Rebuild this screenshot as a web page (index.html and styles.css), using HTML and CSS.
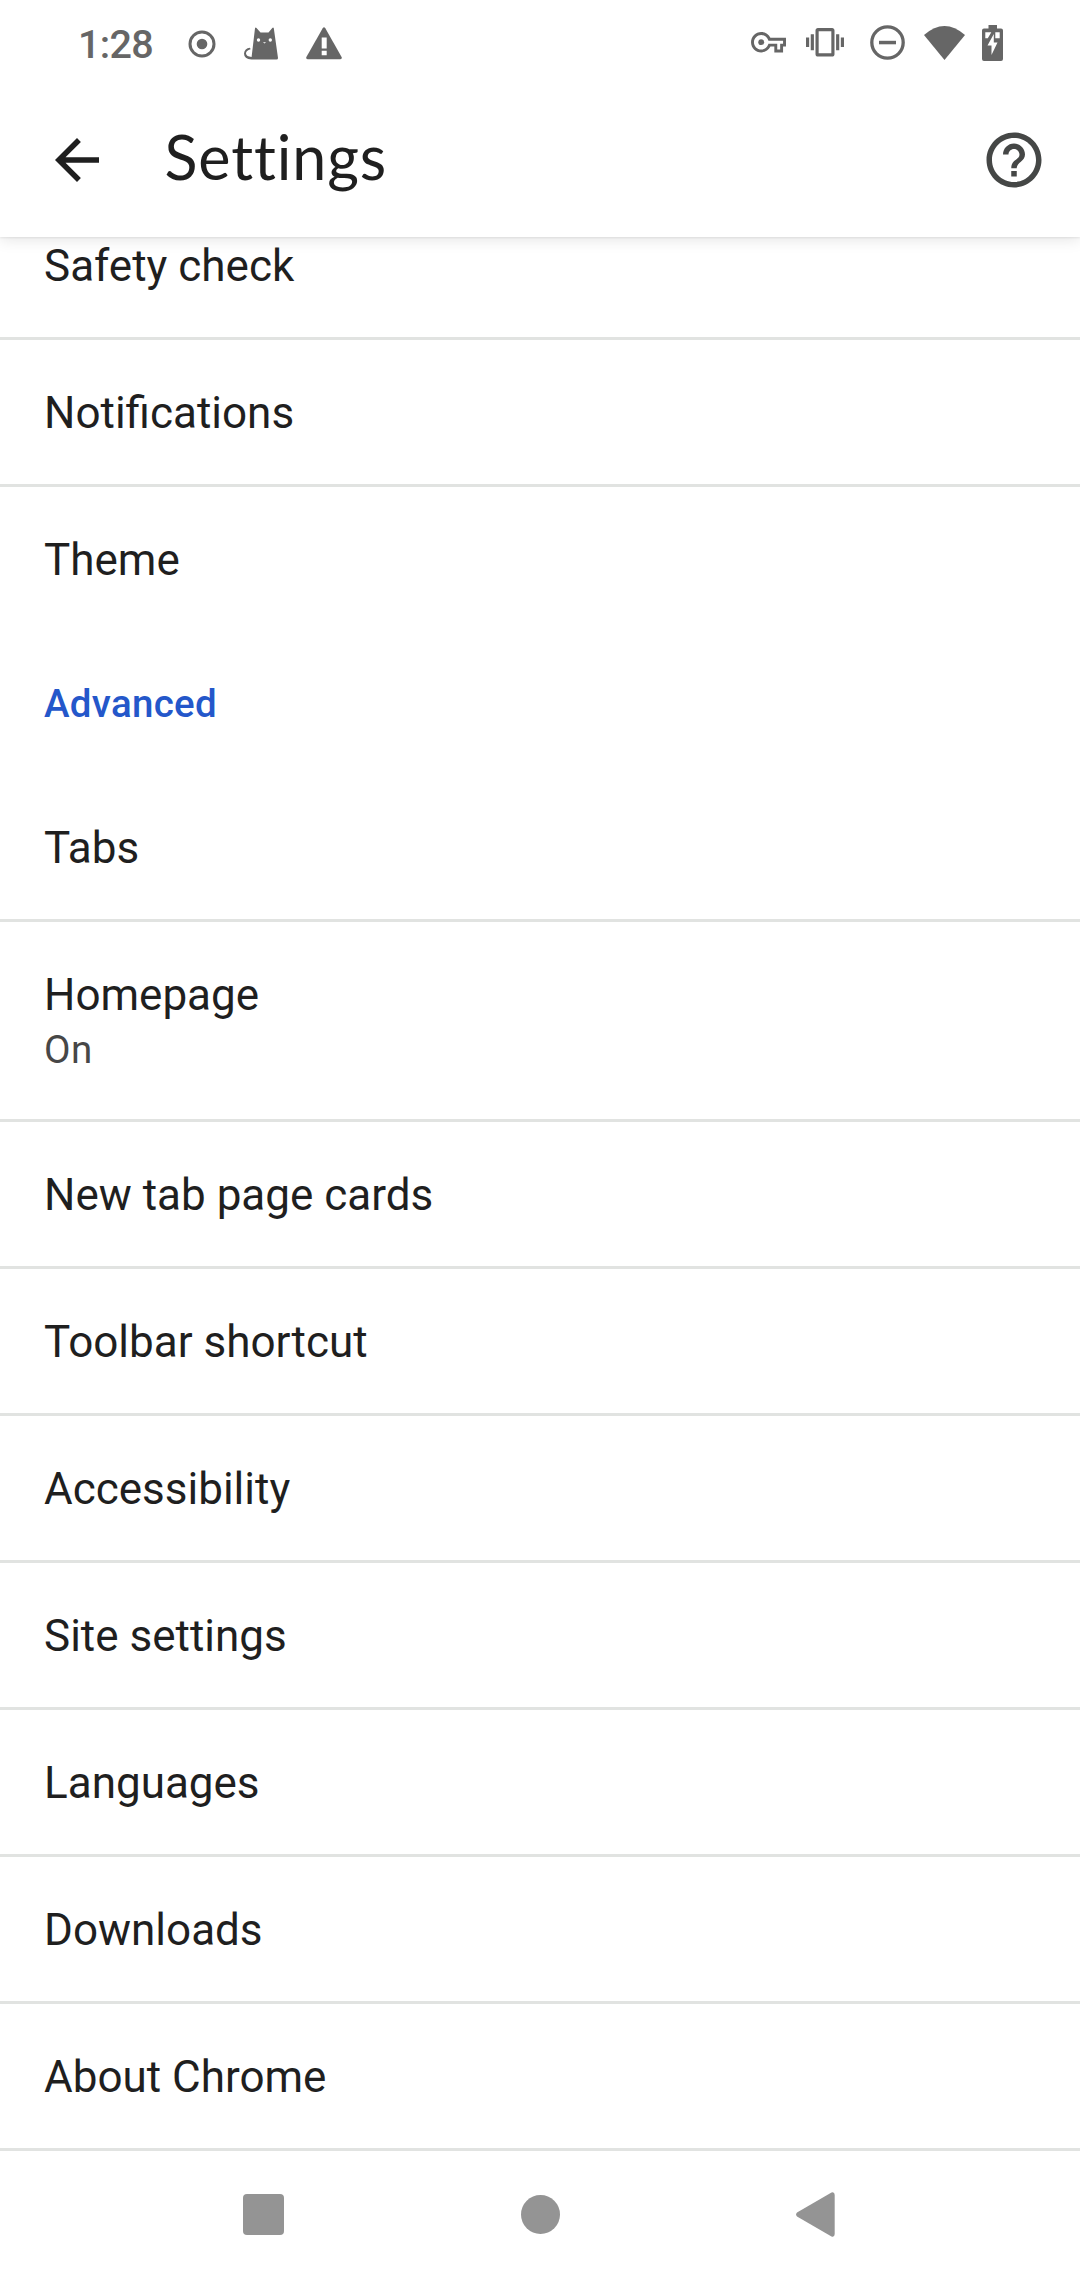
FILE: index.html
```html
<!DOCTYPE html>
<html lang="en">
<head>
<meta charset="utf-8">
<title>Settings</title>
<link rel="stylesheet" href="styles.css">
</head>
<body>
<div class="screen">
  <header class="top">
    <div class="status">
      <div class="status-left">
        <span class="clock">1:28</span>
        <svg class="i-record" viewBox="0 0 28 28"><circle cx="14" cy="14" r="12" fill="none" stroke="currentColor" stroke-width="3"/><circle cx="14" cy="14" r="5.3"/></svg>
        <svg class="i-cat" viewBox="0 0 34 33"><path d="M11 1.200Q11.600 0 12.500 1L16.500 5.500H24.500L28.300 1Q29.200 0 29.800 1.200L34 31Q34 32.600 32.500 32.600H7.500Q0 32 0 26.500Q.5 21.500 6 20.800L6.600 22.300Q2 23.500 2 26.500Q2.300 29.500 7.600 30Z"/><g fill="#fff"><circle cx="14.500" cy="13" r="1.700"/><circle cx="26.300" cy="13" r="1.700"/><path d="M19 15.300h3l-1.500 1.300z"/></g></svg>
        <svg class="i-warn" viewBox="0 0 36 33"><path d="M16.700 1.200Q18-.8 19.300 1.200L35.600 30Q36.400 32 34.400 32.300H1.600Q-.4 32 .4 30Z"/><path fill="#fff" d="M15.700 10.500h5v11h-5zM15.700 23.800h5v4.500h-5z"/></svg>
      </div>
      <div class="status-right">
        <svg class="i-key" viewBox="0 5 24 14"><path d="M22 19h-6v-4h-2.680c-1.140 2.420-3.600 4-6.320 4-3.860 0-7-3.140-7-7s3.140-7 7-7c2.720 0 5.170 1.580 6.320 4H24v6h-2v4zm-4-2h2v-4h2v-2H11.940l-.23-.67C11.010 8.340 9.110 7 7 7c-2.760 0-5 2.240-5 5s2.240 5 5 5c2.110 0 4.010-1.340 4.710-3.330l.23-.67H18v4z"/><circle cx="7" cy="12" r="2"/></svg>
        <svg class="i-vibrate" viewBox="0 3 24 18"><path d="M0 15h2V9H0v6zm3 2h2V7H3v10zm19-8v6h2V9h-2zm-3 8h2V7h-2v10zM16.500 3h-9C6.670 3 6 3.670 6 4.500v15c0 .83.67 1.500 1.500 1.500h9c.83 0 1.500-.67 1.500-1.500v-15c0-.83-.67-1.500-1.500-1.500zM16 19H8V5h8v14z"/></svg>
        <svg class="i-dnd" viewBox="0 0 35 35"><circle cx="17.500" cy="17.500" r="15.700" fill="none" stroke="currentColor" stroke-width="3.300"/><path d="M9 15.800h17v3.500H9z"/></svg>
        <svg class="i-wifi" viewBox="0 0 41 34"><path d="M0 9Q20.500-9 41 9L20.500 34Z"/></svg>
        <svg class="i-battery" viewBox="0 0 21 36"><path d="M6.500 0h8.500v3.500H19q2 0 2 2V34q0 2-2 2H2q-2 0-2-2V5.500q0-2 2-2h4.500z"/><path fill="#fff" d="M3.300 7.300h6l-3.500 6H3.300zM13.300 7.300H17.700v6h-4.400zM11.800 9V17.500h3.700L9.500 30V20.500H5.500Z"/></svg>
      </div>
    </div>
    <div class="appbar">
      <svg class="i-back" viewBox="0 0 24 24"><path d="M20 11H7.830l5.590-5.590L12 4l-8 8 8 8 1.410-1.410L7.830 13H20v-2z"/></svg>
      <h1 class="title">Settings</h1>
      <svg class="i-help" viewBox="0 0 24 24"><path d="M11 18h2v-2h-2v2zm1-16C6.480 2 2 6.480 2 12s4.480 10 10 10 10-4.480 10-10S17.520 2 12 2zm0 18c-4.410 0-8-3.590-8-8s3.590-8 8-8 8 3.590 8 8-3.590 8-8 8zm0-14c-2.210 0-4 1.790-4 4h2c0-1.100.9-2 2-2s2 .9 2 2c0 2-3 1.750-3 5h2c0-2.250 3-2.500 3-5 0-2.210-1.790-4-4-4z"/></svg>
    </div>
  </header>
  <main class="list">
    <div class="row first">Safety check</div>
    <div class="row">Notifications</div>
    <div class="row plain">Theme</div>
    <h2 class="section">Advanced</h2>
    <div class="row">Tabs</div>
    <div class="row tall">Homepage<span class="summary">On</span></div>
    <div class="row">New tab page cards</div>
    <div class="row">Toolbar shortcut</div>
    <div class="row">Accessibility</div>
    <div class="row">Site settings</div>
    <div class="row">Languages</div>
    <div class="row">Downloads</div>
    <div class="row">About Chrome</div>
  </main>
  <nav class="nav">
    <svg class="n-recent" viewBox="0 0 41 41"><rect width="41" height="41" rx="4"/></svg>
    <svg class="n-home" viewBox="0 0 39 39"><circle cx="19.500" cy="19.500" r="19.500"/></svg>
    <svg class="n-back" viewBox="0 0 39 45"><path d="M1 20.500L35.500.5Q38.500-.6 38.700 3V42Q38.500 45.600 35.500 44.500L1 24.500Q-.8 22.500 1 20.500Z"/></svg>
  </nav>
</div>
</body>
</html>
```
FILE: styles.css
```css
* { box-sizing: border-box; }
body { margin: 0; background: #fff; font-family: Roboto, "Liberation Sans", sans-serif; color: #1f1f1f; }
svg { display: block; flex: none; fill: currentColor; }
.screen { width: 1080px; height: 2280px; display: flex; flex-direction: column; overflow: hidden; }
.top { height: 237px; flex: none; background: #fff; box-shadow: 0 1px 2px rgba(0,0,0,.08), 0 3px 14px rgba(0,0,0,.1); }
.status { height: 85px; display: flex; justify-content: space-between; padding: 0 77px 0 78px; color: #666; }
.status-left, .status-right { display: flex; align-items: center; }
.clock { width: 110px; font-size: 39.500px; font-weight: 500; letter-spacing: -.7px; line-height: 46px; margin-top: 5px; }
.i-record { width: 28px; height: 28px; margin-top: 2px; }
.i-cat { width: 34px; height: 33px; margin: 2px 0 0 28px; }
.i-warn { width: 36px; height: 33px; margin: 2px 0 0 28px; }
.i-key { width: 35px; height: 20.400px; }
.i-vibrate { width: 38px; height: 28.500px; margin-left: 20px; }
.i-dnd { width: 35px; height: 35px; margin-left: 26px; }
.i-wifi { width: 41px; height: 34px; margin-left: 19px; }
.i-battery { width: 21px; height: 36px; margin-left: 17px; }
.appbar { height: 150px; display: flex; align-items: center; padding: 0 33px 0 44px; }
.i-back { width: 66px; height: 66px; }
.title { flex: 1; margin: -6px 0 0 54.500px; font: 400 61px/72px Lato, Roboto, sans-serif; letter-spacing: .9px; font-variant-ligatures: common-ligatures; }
.i-help { width: 66px; height: 66px; color: #454746; }
.list { flex: none; }
.row { height: 147px; border-bottom: 3px solid #e1e3e1; padding: 46px 44px 0; font-size: 44px; line-height: 54px; }
.first { height: 103px; padding-top: 2px; }
.plain { height: 144px; border-bottom: 0; }
.tall { height: 200px; }
.summary { display: block; font-size: 38.500px; line-height: 48px; margin-top: 4px; color: #474747; letter-spacing: .4px; }
.section { height: 144px; margin: 0; padding: 49px 44px 0; font-size: 38.500px; font-weight: 500; line-height: 48px; letter-spacing: .3px; color: #2457ca; }
.nav { flex: 1; display: flex; align-items: center; padding: 0 0 2px 243px; color: #949494; }
.n-recent { width: 41px; height: 41px; }
.n-home { width: 39px; height: 39px; margin-left: 237px; }
.n-back { width: 39px; height: 45px; margin-left: 236px; }
```
